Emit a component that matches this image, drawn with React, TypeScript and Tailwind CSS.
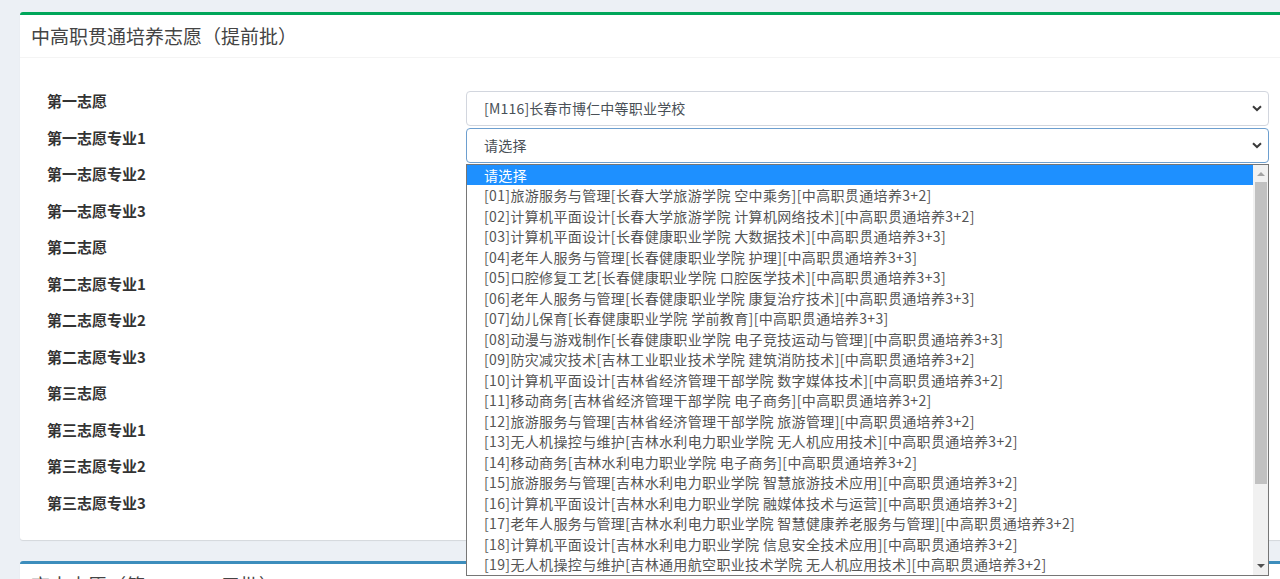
import React from "react";

const labels = [
  "第一志愿",
  "第一志愿专业1",
  "第一志愿专业2",
  "第一志愿专业3",
  "第二志愿",
  "第二志愿专业1",
  "第二志愿专业2",
  "第二志愿专业3",
  "第三志愿",
  "第三志愿专业1",
  "第三志愿专业2",
  "第三志愿专业3",
];

const options = [
  "[01]旅游服务与管理[长春大学旅游学院 空中乘务][中高职贯通培养3+2]",
  "[02]计算机平面设计[长春大学旅游学院 计算机网络技术][中高职贯通培养3+2]",
  "[03]计算机平面设计[长春健康职业学院 大数据技术][中高职贯通培养3+3]",
  "[04]老年人服务与管理[长春健康职业学院 护理][中高职贯通培养3+3]",
  "[05]口腔修复工艺[长春健康职业学院 口腔医学技术][中高职贯通培养3+3]",
  "[06]老年人服务与管理[长春健康职业学院 康复治疗技术][中高职贯通培养3+3]",
  "[07]幼儿保育[长春健康职业学院 学前教育][中高职贯通培养3+3]",
  "[08]动漫与游戏制作[长春健康职业学院 电子竞技运动与管理][中高职贯通培养3+3]",
  "[09]防灾减灾技术[吉林工业职业技术学院 建筑消防技术][中高职贯通培养3+2]",
  "[10]计算机平面设计[吉林省经济管理干部学院 数字媒体技术][中高职贯通培养3+2]",
  "[11]移动商务[吉林省经济管理干部学院 电子商务][中高职贯通培养3+2]",
  "[12]旅游服务与管理[吉林省经济管理干部学院 旅游管理][中高职贯通培养3+2]",
  "[13]无人机操控与维护[吉林水利电力职业学院 无人机应用技术][中高职贯通培养3+2]",
  "[14]移动商务[吉林水利电力职业学院 电子商务][中高职贯通培养3+2]",
  "[15]旅游服务与管理[吉林水利电力职业学院 智慧旅游技术应用][中高职贯通培养3+2]",
  "[16]计算机平面设计[吉林水利电力职业学院 融媒体技术与运营][中高职贯通培养3+2]",
  "[17]老年人服务与管理[吉林水利电力职业学院 智慧健康养老服务与管理][中高职贯通培养3+2]",
  "[18]计算机平面设计[吉林水利电力职业学院 信息安全技术应用][中高职贯通培养3+2]",
  "[19]无人机操控与维护[吉林通用航空职业技术学院 无人机应用技术][中高职贯通培养3+2]",
];

function Chevron() {
  return (
    <svg width="10" height="7" viewBox="0 0 10 7" className="shrink-0">
      <path d="M1 1.2 L5 5 L9 1.2" fill="none" stroke="#3a3a3a" strokeWidth="2" />
    </svg>
  );
}

function Dropdown() {
  return (
    <div className="absolute left-0 right-0 top-full z-10 flex h-[412px] border border-[#767676] bg-white">
      <div className="flex-1 tracking-[0.35px]">
        <div className="flex h-[20px] items-center bg-[#1e90ff] pl-[17px] leading-[20px] text-white">请选择</div>
        {options.map((o) => (
          <div key={o} className="flex h-[20.5px] items-center whitespace-nowrap pl-[17px] leading-[18px] text-[#555]">
            {o}
          </div>
        ))}
      </div>
      <div className="relative w-[15px] bg-[#f1f1f1]">
        <div className="absolute left-[4px] top-[7px] h-0 w-0 border-x-[4px] border-b-[4px] border-x-transparent border-b-[#a3a3a3]" />
        <div className="absolute left-[2px] right-[1px] top-[17px] h-[302px] bg-[#c1c1c1]" />
        <div className="absolute bottom-[7px] left-[4px] h-0 w-0 border-x-[4px] border-t-[4px] border-x-transparent border-t-[#505050]" />
      </div>
    </div>
  );
}

export default function App() {
  return (
    <div
      className="h-screen overflow-hidden bg-[#ecf0f5] pl-[20px] pt-[12px]"
      style={{ fontFamily: '"Noto Sans CJK SC", "Noto Sans", sans-serif' }}
    >
      <div className="mr-[-20px] rounded-[3px] border-t-[3px] border-[#00a65a] bg-white shadow-[0_1px_1px_rgba(0,0,0,0.1)]">
        <div className="flex h-[43px] items-center border-b border-[#f4f4f4] pl-[11px] text-[19px] text-[#444]">
          中高职贯通培养志愿（提前批）
        </div>
        <div className="pb-[11px] pt-[33px]">
          {labels.map((label, i) => (
            <div key={label} className="flex h-[36.5px]">
              <div className="w-[446px] pl-[27px] text-[15px] font-bold leading-[20px] text-[#333]">{label}</div>
              <div className="relative mr-[31px] flex-1">
                <div
                  className={`flex h-[35px] items-center justify-between rounded-[4px] border bg-white pl-[17px] pr-[6px] text-[14px] tracking-[0.2px] text-[#495057] ${
                    i === 1 ? "border-[#6d9fcf]" : "border-[#d2d6de]"
                  }`}
                >
                  <span>{i === 0 ? "[M116]长春市博仁中等职业学校" : "请选择"}</span>
                  <Chevron />
                </div>
                {i === 1 && (
                  <div className="text-[14px]">
                    <Dropdown />
                  </div>
                )}
              </div>
            </div>
          ))}
        </div>
      </div>

      <div className="mr-[-20px] mt-[21px] rounded-[3px] border-t-[3px] border-[#3c8dbc] bg-white shadow-[0_1px_1px_rgba(0,0,0,0.1)]">
        <div className="flex h-[43px] items-center border-b border-[#f4f4f4] pl-[11px] text-[19px] text-[#444]">
          高中志愿（第一、二、三批）
        </div>
      </div>
    </div>
  );
}
